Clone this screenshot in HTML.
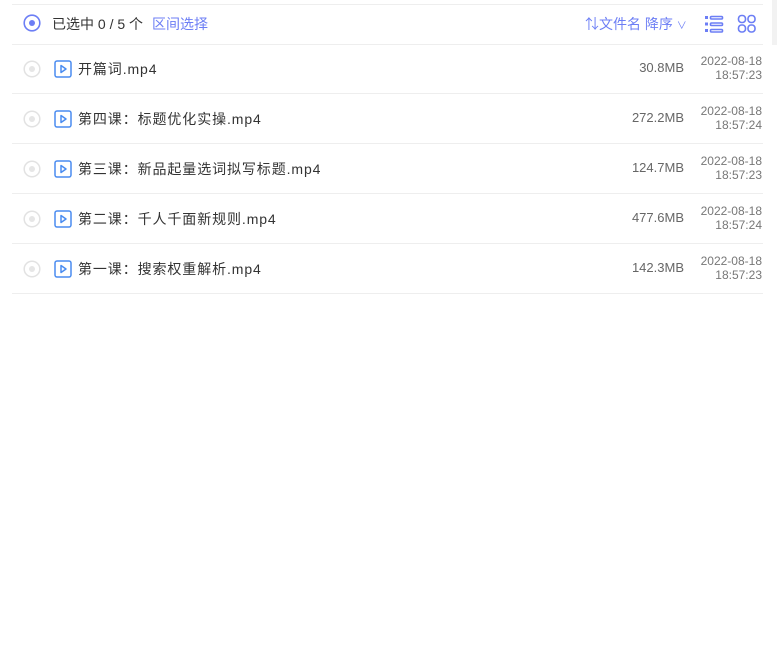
<!DOCTYPE html>
<html><head><meta charset="utf-8"><style>
body{margin:0;width:777px;height:668px;background:#fff;font-family:"Liberation Sans","Noto Sans CJK SC",sans-serif;position:relative;overflow:hidden}
.strip{position:absolute;left:772px;top:0;width:5px;height:45px;background:#f2f2f2}
.hdr{position:absolute;left:12px;top:4px;width:751px;height:39px;border-top:1px solid #eee;border-bottom:1px solid #eee}
.row{position:absolute;left:12px;width:751px;height:49px;border-bottom:1px solid #eee}
.t{position:absolute;white-space:nowrap}
</style></head><body>
<div class="strip"></div>
<div class="hdr">
<svg class="t" style="left:11px;top:9px" width="18" height="18"><circle cx="9" cy="9" r="7.8" fill="none" stroke="#6c7ef5" stroke-width="1.6"/><circle cx="9" cy="9" r="3" fill="#6c7ef5"/></svg>
<div class="t" style="left:40px;top:9px;font-size:14px;color:#333">已选中 0 / 5 个</div>
<div class="t" style="left:140px;top:9px;font-size:14px;color:#6c7ef5">区间选择</div>
<div class="t" style="left:573px;top:9px;font-size:14px;color:#6c7ef5">⇅文件名 降序 <span style="font-size:10px">∨</span></div>
<svg class="t" style="left:692px;top:9px" width="20" height="20" fill="none" stroke="#6c7ef5" stroke-width="1.6"><rect x="1" y="2" width="3" height="3" fill="#6c7ef5" stroke="none"/><rect x="1" y="8.5" width="3" height="3" fill="#6c7ef5" stroke="none"/><rect x="1" y="15" width="3" height="3" fill="#6c7ef5" stroke="none"/><rect x="6.5" y="2.5" width="12" height="2.5" rx="1"/><rect x="6.5" y="9" width="12" height="2.5" rx="1"/><rect x="6.5" y="15.5" width="12" height="2.5" rx="1"/></svg>
<svg class="t" style="left:725px;top:9px" width="20" height="20" fill="none" stroke="#6c7ef5" stroke-width="1.6"><rect x="1.5" y="1.5" width="7" height="7" rx="3"/><rect x="11" y="1.5" width="7" height="7" rx="3"/><rect x="1.5" y="11" width="7" height="7" rx="3"/><rect x="11" y="11" width="7" height="7" rx="3"/></svg>
</div>
<div id="rows"></div>
<script>
var d=[["开篇词.mp4","30.8MB","18:57:23"],["第四课：标题优化实操.mp4","272.2MB","18:57:24"],["第三课：新品起量选词拟写标题.mp4","124.7MB","18:57:23"],["第二课：千人千面新规则.mp4","477.6MB","18:57:24"],["第一课：搜索权重解析.mp4","142.3MB","18:57:23"]];
var h="";d.forEach(function(r,i){var top=44+i*50;h+='<div class="row" style="top:'+top+'px">'+
'<svg class="t" style="left:11px;top:16px" width="18" height="18"><circle cx="9" cy="9" r="7.8" fill="none" stroke="#e2e2e2" stroke-width="1.5"/><circle cx="9" cy="9" r="3" fill="#e6e6e6"/></svg>'+
'<svg class="t" style="left:42px;top:16px" width="18" height="18"><rect x="1" y="1" width="16" height="16" rx="2" fill="none" stroke="#4a8cf0" stroke-width="1.5"/><path d="M7 5.5 L12 9 L7 12.5Z" fill="none" stroke="#4a8cf0" stroke-width="1.5" stroke-linejoin="round"/></svg>'+
'<div class="t" style="left:66px;top:15px;font-size:14px;color:#333;letter-spacing:0.9px">'+r[0]+'</div>'+
'<div class="t" style="right:79px;top:16px;font-size:13px;color:#666">'+r[1]+'</div>'+
'<div class="t" style="right:1px;top:10px;font-size:12px;color:#777;text-align:right;line-height:14px">2022-08-18<br>'+r[2]+'</div></div>';});
document.getElementById("rows").innerHTML=h;
</script>
</body></html>
